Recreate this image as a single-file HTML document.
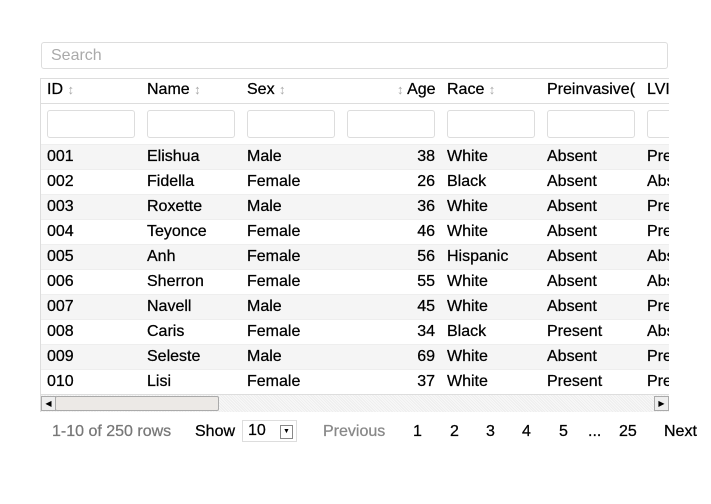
<html><head><style>
body{margin:0;width:711px;height:504px;background:#fff;font-family:"Liberation Sans",Arial,sans-serif;font-size:16px;color:#000;position:relative;overflow:hidden;-webkit-text-stroke:0.25px}
.a{position:absolute;white-space:nowrap}
.search{left:41px;top:42px;height:27px;border:1px solid #ddd;border-radius:3px;color:#aaa;font-size:16px;line-height:25px;padding-left:9px;box-sizing:border-box;width:627px;-webkit-text-stroke:0}
.wrap{position:absolute;left:40px;top:78px;width:628px;height:333px;overflow:hidden;border-left:1px solid #ddd;border-top:1px solid #ddd}
.row{position:absolute;left:0;width:700px;height:25px;line-height:24px}
.c{position:absolute;top:0}
.s{color:#aaa;font-size:13px;-webkit-text-stroke:0}
.f{position:absolute;top:31px;width:86px;height:26px;border:1px solid #ddd;border-radius:3px}
</style></head><body>
<div class="a search">Search</div>
<div class="wrap">
<div class="row" style="top:0;height:24px;line-height:22px;border-bottom:1px solid #ddd">
<span class="c" style="left:6px">ID <span class="s">↕</span></span>
<span class="c" style="left:106px">Name <span class="s">↕</span></span>
<span class="c" style="left:206px">Sex <span class="s">↕</span></span>
<span class="c" style="left:356px"><span class="s">↕</span> Age</span>
<span class="c" style="left:406px">Race <span class="s">↕</span></span>
<span class="c" style="left:506px">Preinvasive(</span>
<span class="c" style="left:606px">LVI</span>
</div>
<div class="f" style="left:6px"></div><div class="f" style="left:106px"></div><div class="f" style="left:206px"></div><div class="f" style="left:306px"></div><div class="f" style="left:406px"></div><div class="f" style="left:506px"></div><div class="f" style="left:606px"></div>
<div id="rows"></div>
<div style="position:absolute;left:0;top:315px;width:628px;height:17px;background:repeating-linear-gradient(45deg,#eee 0 1px,#f8f8f8 1px 2px);border-top:1px solid #ddd">
<div style="position:absolute;left:0;top:1px;width:13px;height:13px;background:#eee;border:1px solid #aaa;font-size:8px;line-height:13px;text-align:center;-webkit-text-stroke:0">◀</div>
<div style="position:absolute;left:14px;top:1px;width:162px;height:13px;background:#ece9e6;border:1px solid #aaa;border-radius:2px"></div>
<div style="position:absolute;right:0;top:1px;width:13px;height:13px;background:#eee;border:1px solid #aaa;font-size:8px;line-height:13px;text-align:center;-webkit-text-stroke:0">▶</div>
</div>
</div>
<div class="a" style="left:52px;top:423px;color:#777">1-10 of 250 rows</div>
<div class="a" style="left:195px;top:423px">Show</div>
<div class="a" style="left:242px;top:420px;width:55px;height:22px;border:1px solid #ddd;box-sizing:border-box;line-height:20px;padding-left:5px">10<span style="position:absolute;right:3px;top:4px;width:11px;height:12px;border:1px solid #888;font-size:7px;line-height:12px;text-align:center;-webkit-text-stroke:0">▼</span></div>
<div class="a" style="left:323px;top:423px;color:#888">Previous</div>
<div class="a" style="left:413px;top:423px">1</div>
<div class="a" style="left:450px;top:423px">2</div>
<div class="a" style="left:486px;top:423px">3</div>
<div class="a" style="left:522px;top:423px">4</div>
<div class="a" style="left:559px;top:423px">5</div>
<div class="a" style="left:588px;top:423px">...</div>
<div class="a" style="left:619px;top:423px">25</div>
<div class="a" style="left:664px;top:423px">Next</div>
<script>
var d=[["001","Elishua","Male","38","White","Absent","Pre"],["002","Fidella","Female","26","Black","Absent","Abs"],["003","Roxette","Male","36","White","Absent","Pre"],["004","Teyonce","Female","46","White","Absent","Pre"],["005","Anh","Female","56","Hispanic","Absent","Abs"],["006","Sherron","Female","55","White","Absent","Abs"],["007","Navell","Male","45","White","Absent","Pre"],["008","Caris","Female","34","Black","Present","Abs"],["009","Seleste","Male","69","White","Absent","Pre"],["010","Lisi","Female","37","White","Present","Pre"]];
var h="";d.forEach(function(r,i){h+='<div class="row" style="top:'+(65+i*25)+'px;background:'+(i%2?'#fff':'#f5f5f5')+';border-top:1px solid #eee"><span class="c" style="left:6px">'+r[0]+'</span><span class="c" style="left:106px">'+r[1]+'</span><span class="c" style="left:206px">'+r[2]+'</span><span class="c" style="left:306px;width:88px;text-align:right">'+r[3]+'</span><span class="c" style="left:406px">'+r[4]+'</span><span class="c" style="left:506px">'+r[5]+'</span><span class="c" style="left:606px">'+r[6]+'</span></div>'});
document.getElementById("rows").innerHTML=h;
</script>
</body></html>
